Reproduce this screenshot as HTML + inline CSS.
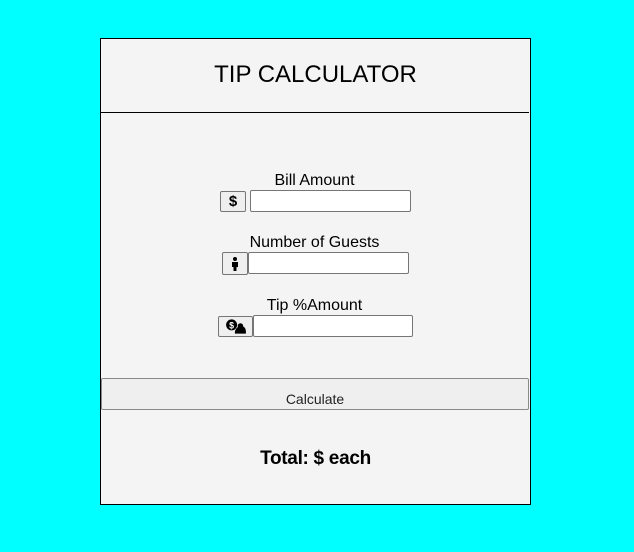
<!DOCTYPE html>
<html><head><meta charset="utf-8"><style>
*{box-sizing:border-box;margin:0;padding:0}
html,body{width:634px;height:552px;background:#00ffff;overflow:hidden;font-family:"Liberation Sans",sans-serif;color:#000}
.card{position:absolute;left:100px;top:38px;width:431px;height:467px;background:#f4f4f4;border:1px solid #000}
.t{position:absolute;left:0;width:100%;text-align:center}
.hr{position:absolute;left:0;top:73px;width:428px;height:1px;background:#000}
.btn{position:absolute;background:#efefef;border:1px solid #767676;border-radius:2px;display:flex;align-items:center;justify-content:center}
.inp{position:absolute;background:#fff;border:1px solid #767676;border-radius:2px}
</style></head><body>
<div class="card">
<div class="t" style="top:22px;font-size:24px;">TIP CALCULATOR</div>
<div class="hr"></div>
<div class="t" style="top:133px;font-size:16px;left:-1px">Bill Amount</div>
<div class="btn" style="left:119px;top:152px;width:26px;height:21px;font-size:15px;font-weight:bold">$</div>
<div class="inp" style="left:149px;top:151px;width:161px;height:22px"></div>
<div class="t" style="top:195px;font-size:16px;left:-1px">Number of Guests</div>
<div class="btn" style="left:121px;top:213px;width:26px;height:23px"><svg width="10" height="14" viewBox="0 0 10 14"><circle cx="5" cy="2" r="2"/><path d="M2 5h6v5H6.5v4h-3v-4H2z"/></svg></div>
<div class="inp" style="left:147px;top:213px;width:161px;height:22px"></div>
<div class="t" style="top:258px;font-size:16px;left:-1px">Tip %Amount</div>
<div class="btn" style="left:117px;top:277px;width:35px;height:21px"><svg width="22" height="15" viewBox="0 0 20 13"><circle cx="6" cy="5" r="5"/><text x="6" y="8.5" font-size="8" font-weight="bold" fill="#fff" text-anchor="middle" font-family="Liberation Sans">$</text><path d="M9 11c1-4 4-5 6-5s4 2 4 5v2H9z"/><circle cx="14" cy="6" r="2.5"/></svg></div>
<div class="inp" style="left:152px;top:276px;width:160px;height:22px"></div>
<div class="btn" style="left:0;top:339px;width:428px;height:32px;font-size:14px;color:#222;align-items:flex-end;padding-bottom:2px;border-color:#8a8a8a">Calculate</div>
<div class="t" style="top:409px;font-size:19px;font-weight:bold;left:0;letter-spacing:-0.3px">Total: $ each</div>
</div>
</body></html>
